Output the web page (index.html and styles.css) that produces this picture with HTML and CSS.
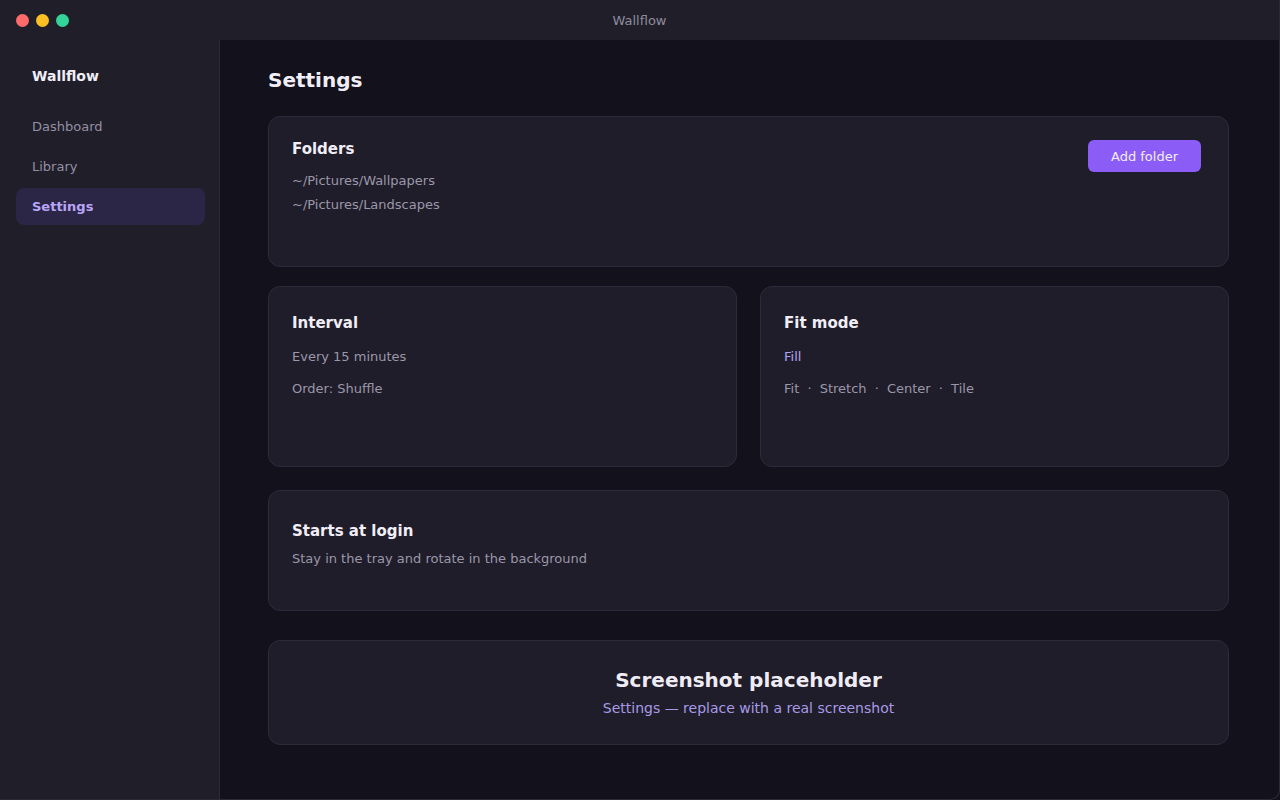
FILE: index.html
```html
<!DOCTYPE html>
<html>
<head>
<meta charset="utf-8">
<link rel="stylesheet" href="styles.css">
</head>
<body>
<div class="window">
  <header class="titlebar">
    <div class="lights">
      <span class="light red"></span>
      <span class="light yellow"></span>
      <span class="light green"></span>
    </div>
    <div class="title">Wallflow</div>
  </header>
  <div class="body">
    <aside class="sidebar">
      <div class="brand">Wallflow</div>
      <nav class="nav">
        <div class="nav-item">Dashboard</div>
        <div class="nav-item">Library</div>
        <div class="nav-item active">Settings</div>
      </nav>
    </aside>
    <main class="main">
      <h1 class="page-title">Settings</h1>
      <section class="card folders">
        <div class="folders-text">
          <h2 class="card-title">Folders</h2>
          <div class="path">~/Pictures/Wallpapers</div>
          <div class="path">~/Pictures/Landscapes</div>
        </div>
        <button class="btn">Add folder</button>
      </section>
      <div class="row">
        <section class="card tall">
          <h2 class="card-title">Interval</h2>
          <div class="line first">Every 15 minutes</div>
          <div class="line">Order: Shuffle</div>
        </section>
        <section class="card tall">
          <h2 class="card-title">Fit mode</h2>
          <div class="line first accent">Fill</div>
          <div class="line">Fit <span class="dot">·</span> Stretch <span class="dot">·</span> Center <span class="dot">·</span> Tile</div>
        </section>
      </div>
      <section class="card login">
        <h2 class="card-title">Starts at login</h2>
        <div class="sub">Stay in the tray and rotate in the background</div>
      </section>
      <section class="card placeholder">
        <div class="ph-title">Screenshot placeholder</div>
        <div class="ph-sub">Settings — replace with a real screenshot</div>
      </section>
    </main>
  </div>
</div>
</body>
</html>
```
FILE: styles.css
```css
* { box-sizing: border-box; }
html, body { margin: 0; padding: 0; }
body {
  width: 1280px;
  height: 800px;
  background: #13121c;
  font-family: "DejaVu Sans", "Liberation Sans", sans-serif;
  overflow: hidden;
}
.window {
  width: 1280px;
  height: 800px;
  display: flex;
  flex-direction: column;
  border-right: 1px solid #2b2a37;
  border-bottom: 1px solid #2b2a37;
  border-radius: 0 0 10px 0;
  overflow: hidden;
  background: #13121c;
}
.titlebar {
  height: 40px;
  flex: none;
  background: #1f1e29;
  display: flex;
  align-items: center;
  position: relative;
}
.lights {
  display: flex;
  gap: 7px;
  padding-left: 16px;
}
.light {
  width: 13px;
  height: 13px;
  border-radius: 50%;
  display: block;
}
.red { background: #ff6b6b; }
.yellow { background: #fbbf24; }
.green { background: #34d399; }
.title {
  position: absolute;
  left: 0;
  right: 0;
  text-align: center;
  font-size: 13px;
  color: #8f8b9f;
}
.body {
  flex: 1;
  display: flex;
  min-height: 0;
}
.sidebar {
  width: 220px;
  flex: none;
  background: #1f1e29;
  border-right: 1px solid #2c2b38;
  padding: 26px 14px 0 16px;
}
.brand {
  font-size: 14px;
  font-weight: bold;
  color: #f1eef7;
  padding-left: 16px;
  height: 20px;
  line-height: 20px;
}
.nav {
  margin-top: 22px;
  display: flex;
  flex-direction: column;
  gap: 3px;
}
.nav-item {
  height: 37px;
  line-height: 37px;
  padding-left: 16px;
  font-size: 13px;
  color: #948fa3;
  border-radius: 8px;
}
.nav-item.active {
  background: #2b2546;
  color: #b9a6f7;
  font-weight: bold;
}
.main {
  flex: 1;
  padding: 0 50px 0 48px;
}
.page-title {
  margin: 0;
  padding-top: 27px;
  height: 76px;
  font-size: 20px;
  line-height: 26px;
  font-weight: bold;
  color: #f1eef7;
}
.card {
  background: #1f1d29;
  border: 1px solid #2d2b3a;
  border-radius: 12px;
  padding: 23px 23px;
}
.card-title {
  margin: 0;
  font-size: 15px;
  line-height: 20px;
  font-weight: bold;
  color: #f1eef7;
}
.folders {
  height: 151px;
  display: flex;
  justify-content: space-between;
  align-items: flex-start;
  margin-bottom: 19px;
  padding-top: 22px;
}
.path {
  font-size: 13px;
  line-height: 24px;
  color: #9b97a9;
}
.folders-text .card-title { margin-bottom: 10px; }
.btn {
  width: 113px;
  height: 32px;
  background: #8b5cf6;
  color: #f3eeff;
  border: none;
  border-radius: 6px;
  font-family: inherit;
  font-size: 13px;
  padding: 0;
  margin-top: 1px;
  margin-right: 4px;
}
.row {
  display: grid;
  grid-template-columns: 1fr 1fr;
  gap: 23px;
  margin-bottom: 23px;
}
.tall { height: 181px; padding-top: 26px; }
.line {
  font-size: 13px;
  line-height: 20px;
  color: #9b97a9;
  margin-top: 12px;
}
.line.first { margin-top: 14px; }
.accent { color: #b4a2f2; }
.dot { padding: 0 4px; }
.login {
  height: 121px;
  padding-top: 30px;
  margin-bottom: 29px;
}
.sub {
  font-size: 13px;
  line-height: 20px;
  color: #9b97a9;
  margin-top: 8px;
}
.placeholder {
  height: 105px;
  text-align: center;
  padding-top: 26px;
}
.ph-title {
  font-size: 20px;
  line-height: 26px;
  font-weight: bold;
  color: #efecf6;
}
.ph-sub {
  font-size: 14px;
  line-height: 20px;
  color: #a89ae6;
  margin-top: 5px;
}
```
